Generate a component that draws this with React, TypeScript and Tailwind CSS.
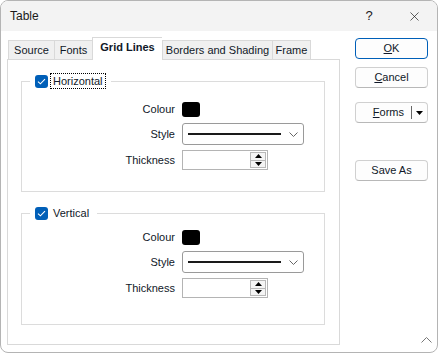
import React from "react";
import { X } from "lucide-react";

const tabs = [
  { label: "Source", w: "w-[46px]" },
  { label: "Fonts", w: "w-[38px]" },
  { label: "Grid Lines", w: "w-[70px]", active: true },
  { label: "Borders and Shading", w: "w-[110px]" },
  { label: "Frame", w: "w-[39px]", last: true },
];

function Check() {
  return (
    <span className="w-[13px] h-[13px] rounded-[3px] bg-[#005fb8] flex items-center justify-center">
      <svg width="9" height="7" viewBox="0 0 9 7">
        <polyline points="1,3.6 3.4,5.8 8,1.2" fill="none" stroke="#fff" strokeWidth="1.1" />
      </svg>
    </span>
  );
}

function Spinner() {
  return (
    <div className="absolute right-[1px] top-[1px] bottom-[1px] w-[16px] border border-[#b8b8b8] bg-[#f4f4f4] flex flex-col">
      <div className="flex-1 flex items-center justify-center border-b border-[#b8b8b8]">
        <svg width="7" height="4" viewBox="0 0 7 4"><polygon points="0,4 7,4 3.5,0" fill="#000" /></svg>
      </div>
      <div className="flex-1 flex items-center justify-center">
        <svg width="7" height="4" viewBox="0 0 7 4"><polygon points="0,0 7,0 3.5,4" fill="#000" /></svg>
      </div>
    </div>
  );
}

function Rows({ pt, pb }: { pt: string; pb: string }) {
  return (
    <div className={`grid grid-cols-[153px_auto] gap-x-[7px] ${pt} ${pb}`}>
      <div className="h-[15px] flex items-center justify-end">Colour</div>
      <div className="h-[15px] w-[18px] rounded-[3px] bg-black" />

      <div className="mt-[6px] h-[22px] flex items-center justify-end">Style</div>
      <div className="mt-[6px] h-[22px] w-[122px] border border-[#9a9a9a] rounded-[3px] bg-white flex items-center pl-[5px] pr-[4px]">
        <div className="w-[93px] h-[2px] bg-[#1a1a1a]" />
        <svg className="ml-auto mr-[1px]" width="9" height="5" viewBox="0 0 9 5">
          <polyline points="0.5,0.5 4.5,4.5 8.5,0.5" fill="none" stroke="#666" strokeWidth="1" />
        </svg>
      </div>

      <div className="mt-[5px] h-[20px] flex items-center justify-end">Thickness</div>
      <div className="mt-[5px] h-[20px] w-[86px] border border-[#b4b4b4] bg-white relative">
        <Spinner />
      </div>
    </div>
  );
}

function Group({ label, focus, pt, pb, className }: { label: string; focus?: boolean; pt: string; pb: string; className?: string }) {
  return (
    <fieldset className={`w-[304px] border border-[#dcdcdc] ${className ?? ""}`}>
      <legend className="ml-[8px] px-[5px]">
        <span className="h-[16px] flex items-center">
          <Check />
          <span className={`ml-[2px] px-[2px] leading-[14px] ${focus ? "border border-dotted border-black" : "border border-transparent"}`}>
            {label}
          </span>
        </span>
      </legend>
      <Rows pt={pt} pb={pb} />
    </fieldset>
  );
}

function Btn({ children, primary, className }: { children: React.ReactNode; primary?: boolean; className?: string }) {
  return (
    <div
      className={`h-[21px] w-[73px] rounded-[4px] bg-[#fdfdfd] border flex items-center justify-center ${
        primary ? "border-[#005fb8]" : "border-[#d0d0d0] border-b-[#b8b8b8]"
      } ${className ?? ""}`}
    >
      {children}
    </div>
  );
}

export default function App() {
  return (
    <div className="w-[438px] h-[353px] bg-white border border-[#b4b4b4] rounded-[8px] overflow-hidden flex flex-col font-['Liberation_Sans',Arial,sans-serif] text-[11px] text-[#101828]">
      {/* title bar */}
      <div className="h-[30px] shrink-0 bg-[#f3f3f3] flex items-center pl-[9px] text-[#1a1a1a]">
        <span className="text-[12px]">Table</span>
        <span className="ml-auto w-[44px] text-center text-[13px]">?</span>
        <span className="w-[46px] flex items-center justify-center">
          <X size={15} strokeWidth={1.1} />
        </span>
      </div>

      <div className="flex-1 flex pt-[6px] pl-[6px]">
        {/* tabs + panel */}
        <div className="w-[333px] flex flex-col">
          <div className="h-[22px] flex items-end pl-[1px]">
            {tabs.map((t) => (
              <div
                key={t.label}
                className={`${t.w} flex items-center justify-center border-t border-l border-[#d9d9d9] ${
                  t.last ? "border-r" : ""
                } ${
                  t.active
                    ? "h-[23px] -mb-[1px] bg-white relative z-10 font-bold pb-[3px]"
                    : "h-[19px] bg-[#f0f0f0]"
                }`}
              >
                {t.label}
              </div>
            ))}
          </div>
          <div className="h-[286px] border border-[#d9d9d9] bg-white pt-[13px] pl-[13px]">
            <Group label="Horizontal" focus pt="pt-[13px]" pb="pb-[21px]" />
            <Group label="Vertical" pt="pt-[9px]" pb="pb-[26px]" className="mt-[13px]" />
          </div>
        </div>

        {/* buttons */}
        <div className="flex-1 flex flex-col pl-[15px] pt-[1px]">
          <Btn primary>
            <span><u>O</u>K</span>
          </Btn>
          <Btn className="mt-[8px]">
            <span><u>C</u>ancel</span>
          </Btn>
          <Btn className="mt-[14px] !justify-end">
            <span><u>F</u>orms</span>
            <span className="ml-[7px] w-px h-[13px] bg-[#666]" />
            <span className="w-[15px] flex items-center justify-center">
              <svg width="7" height="4" viewBox="0 0 7 4"><polygon points="0,0 7,0 3.5,4" fill="#000" /></svg>
            </span>
          </Btn>
          <Btn className="mt-[37px]">Save As</Btn>
          <div className="mt-auto mb-[9px] self-end mr-[5px]">
            <svg width="11" height="6" viewBox="0 0 11 6">
              <polyline points="0.5,5.5 5.5,0.5 10.5,5.5" fill="none" stroke="#777" strokeWidth="1" />
            </svg>
          </div>
        </div>
      </div>
    </div>
  );
}
